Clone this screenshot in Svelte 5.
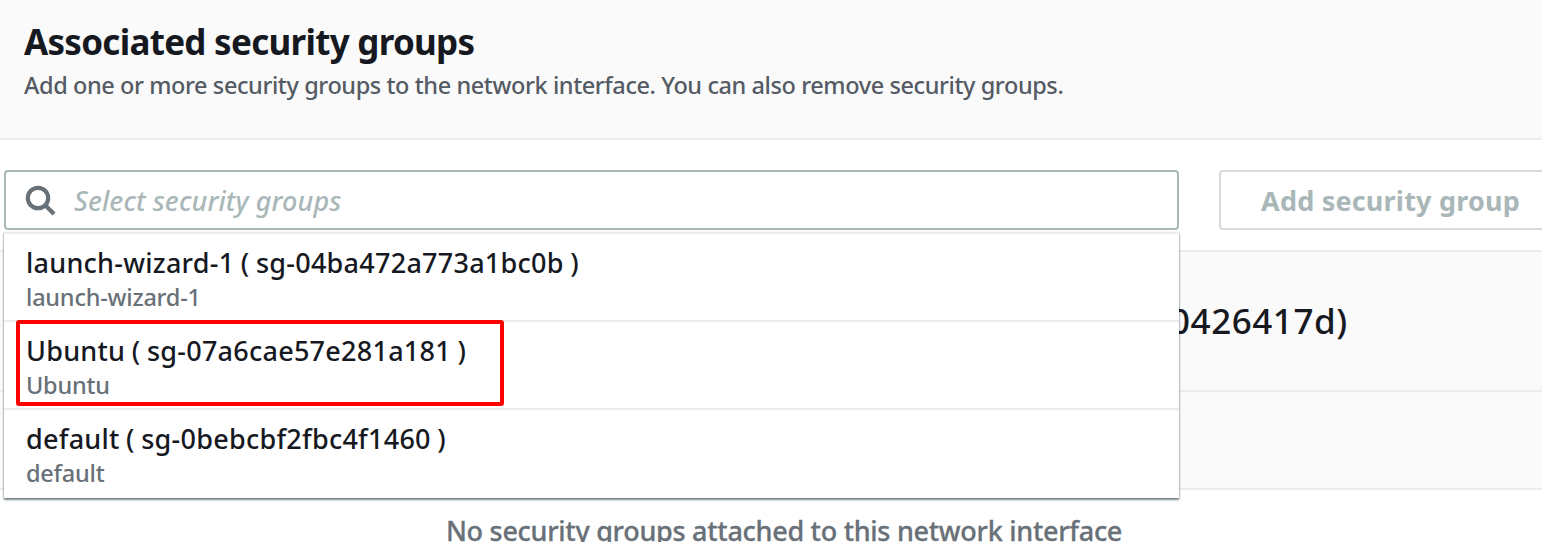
<script>
  const groups = [
    { name: 'launch-wizard-1', id: 'sg-04ba472a773a1bc0b' },
    { name: 'Ubuntu', id: 'sg-07a6cae57e281a181', marked: true },
    { name: 'default', id: 'sg-0bebcbf2fbc4f1460' },
  ];
</script>

<main>
  <header>
    <h2>Associated security groups</h2>
    <p>Add one or more security groups to the network interface. You can also remove security groups.</p>
  </header>
  <div class="toolbar">
    <div class="select">
      <div class="field">
        <svg viewBox="0 0 32 32" width="32" height="32"><circle cx="13" cy="13" r="10.2" /><path d="M20 20 29 29" /></svg>
        <span class="placeholder">Select security groups</span>
      </div>
      <ul class="menu">
        {#each groups as g}
          <li class:marked={g.marked}>
            <span class="name">{g.name} ( {g.id} )</span>
            <span class="desc">{g.name}</span>
          </li>
        {/each}
      </ul>
    </div>
    <button disabled>Add security group</button>
  </div>
  <section class="attached"><h3>0426417d)</h3></section>
  <section class="columns"></section>
  <p class="empty">No security groups attached to this network interface</p>
</main>

<style>
  :global(body) { margin: 0; background: #fff; overflow: hidden; }
  main { width: 1542px; height: 542px; overflow: hidden; font-family: "Noto Sans", sans-serif; font-weight: 500; color: #16191f; }
  *, *::after { box-sizing: border-box; }
  h2, h3, p, ul { margin: 0; padding: 0; font-weight: 500; white-space: nowrap; }
  header { height: 140px; padding: 18px 24px 0; background: #fafafa; border-bottom: 2px solid #eaeded; }
  h2 { font-size: 35px; line-height: 48px; font-weight: 700; letter-spacing: -.72px; }
  header p { font-size: 23.5px; line-height: 39px; color: #545b64; letter-spacing: -.41px; }
  .toolbar { display: flex; gap: 40px; height: 110px; padding: 30px 0 0 4px; }
  .select { position: relative; flex: none; width: 1175px; height: 60px; }
  .field { display: flex; align-items: center; height: 60px; padding-left: 19px; gap: 17px; border: 2px solid #aab7b8; border-radius: 4px; }
  svg { fill: none; stroke: #687078; stroke-width: 4.2; margin-top: 2px; }
  .placeholder { font-size: 27px; font-style: italic; color: #aab7b8; letter-spacing: .1px; }
  .menu { position: absolute; z-index: 1; top: 62px; left: 0; width: 1175px; height: 266px; list-style: none; background: #fff; border-top: 2px solid #eaeded; box-shadow: 0 2px 2px 0 rgba(0, 28, 36, .4), 0 1px 2px rgba(0, 28, 36, .4); }
  li { position: relative; display: flex; flex-direction: column; align-items: flex-start; height: 88px; padding: 9px 22px 0; border-bottom: 2px solid #eaeded; }
  li:last-child { border: 0; }
  .name { font-size: 27px; line-height: 39px; letter-spacing: .25px; word-spacing: -.8px; }
  .desc { font-size: 23.5px; line-height: 30px; color: #687078; letter-spacing: -.22px; }
  .marked::after { content: ""; position: absolute; left: 12px; top: -2px; width: 488px; height: 86px; border: 4px solid #f00; border-radius: 3px; }
  button { flex: none; width: 360px; height: 60px; padding: 0 0 0 40px; text-align: left; background: #fff; border: 2px solid #d5dbdb; border-radius: 4px; font: 700 27px "Noto Sans", sans-serif; color: #aab7b8; letter-spacing: .2px; }
  section { background: #fafafa; border-top: 2px solid #eaeded; }
  .attached { height: 140px; padding: 43px 0 0 1170px; }
  h3 { font-size: 35px; line-height: 52px; letter-spacing: .55px; }
  .columns { height: 100px; border-bottom: 2px solid #eaeded; }
  .empty { padding: 21px 0 0 26px; text-align: center; font-size: 27px; line-height: 40px; color: #687078; letter-spacing: -.28px; -webkit-text-stroke: .3px #687078; }
</style>
